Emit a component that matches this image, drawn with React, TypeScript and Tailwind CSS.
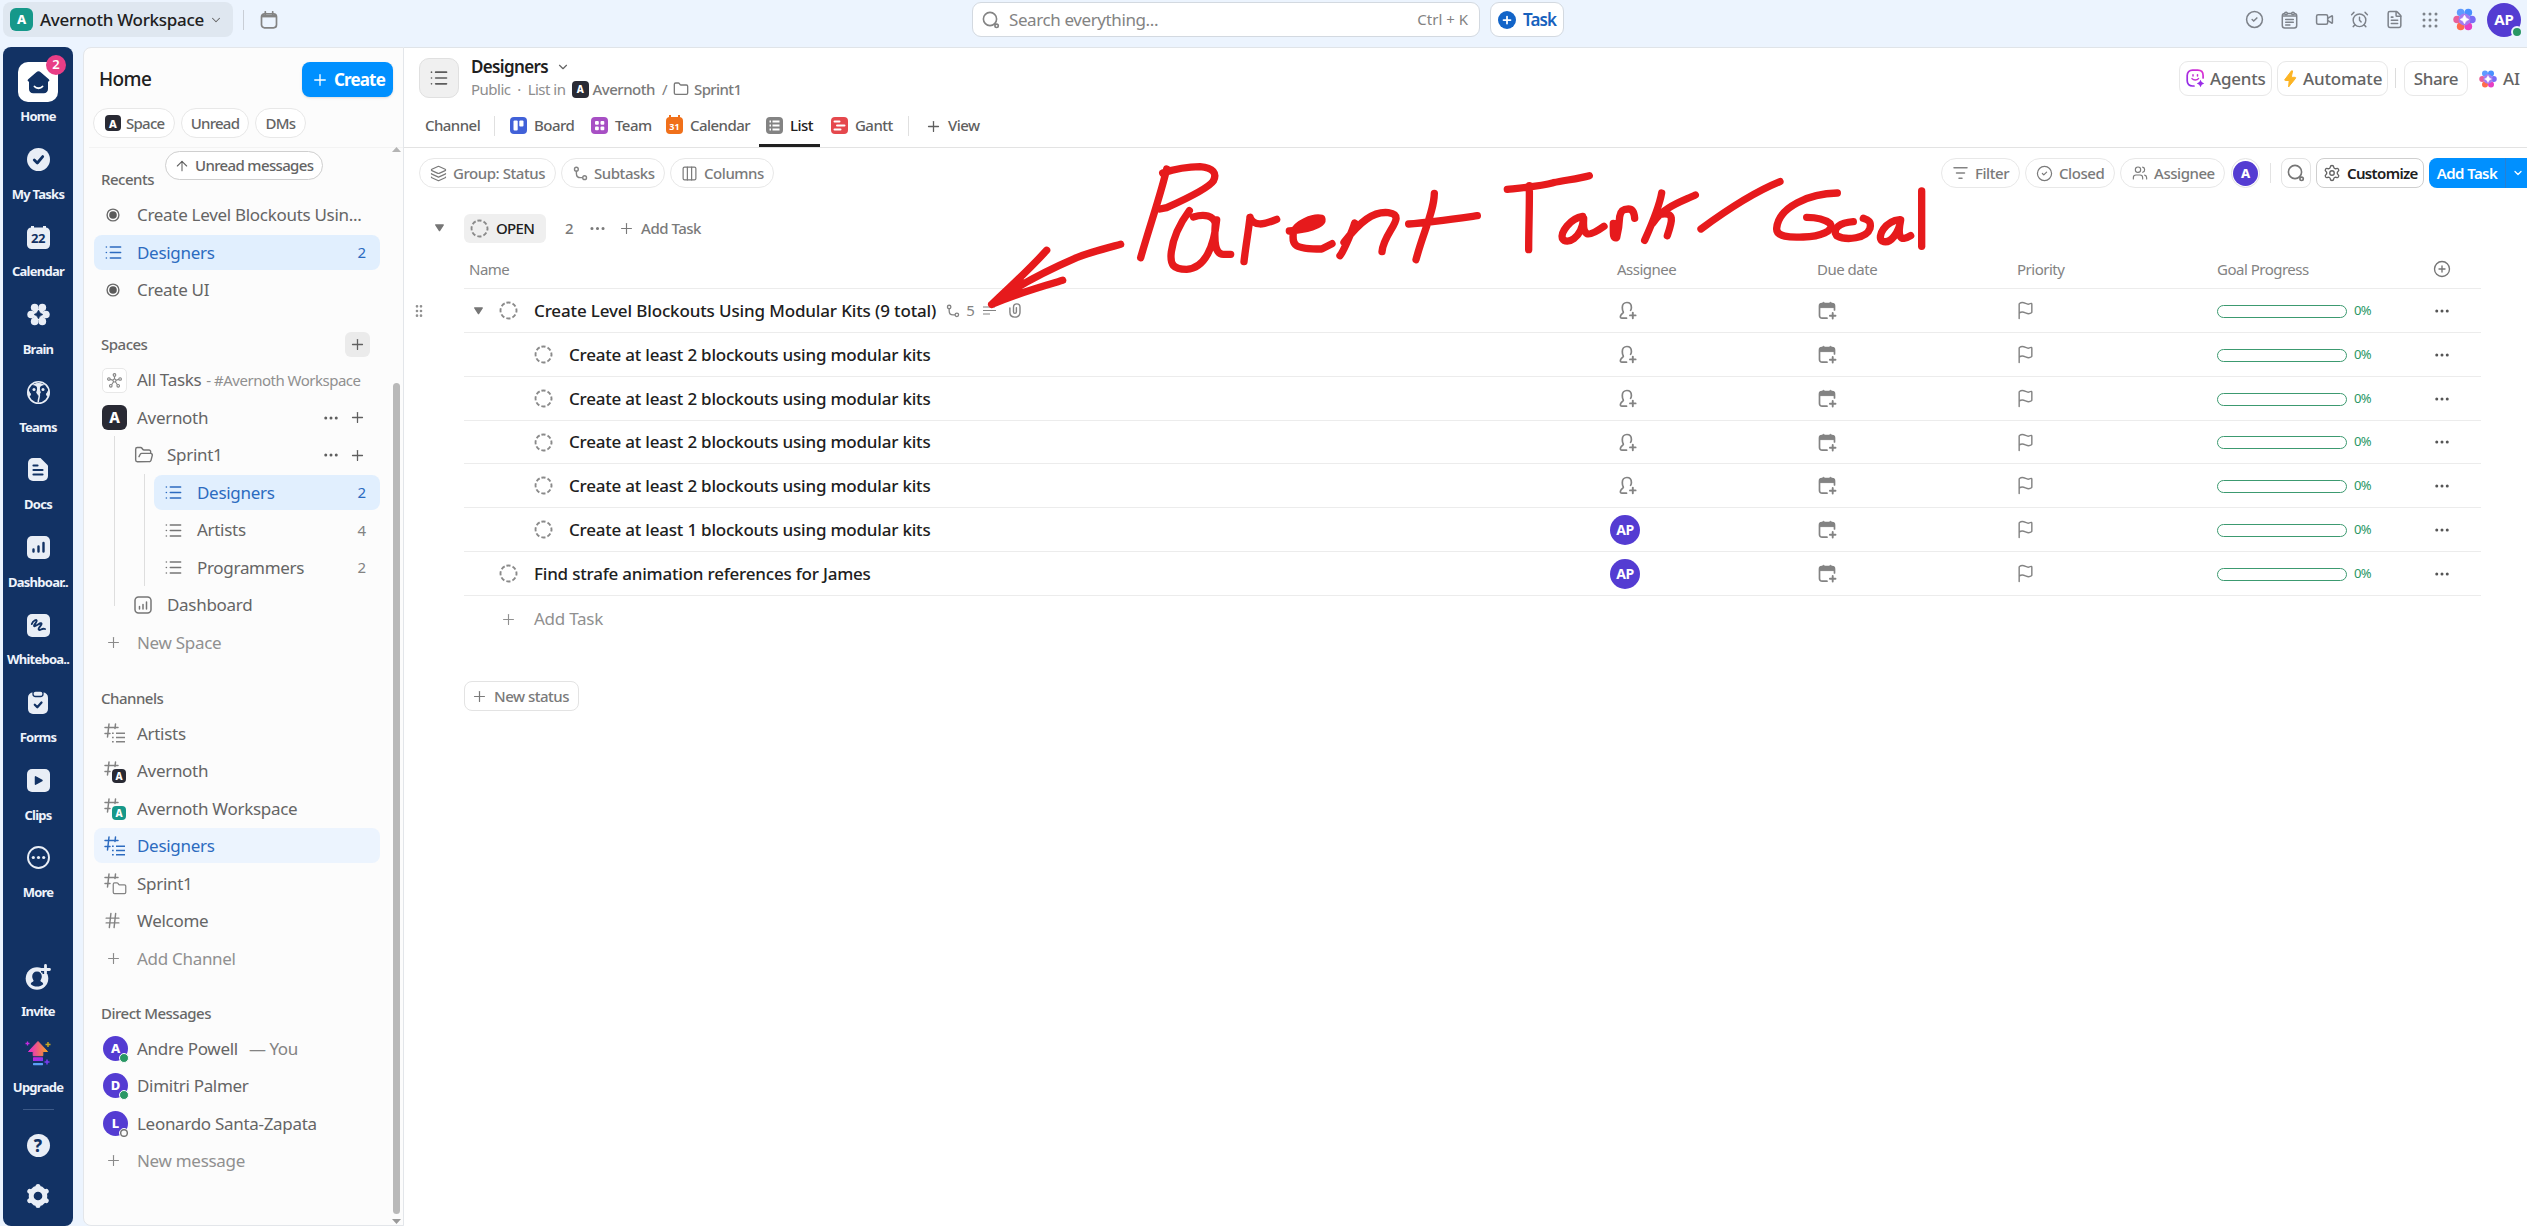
import React from 'react';
import {
  AlarmClock, ArrowUp, ChevronDown, Circle, CircleCheck, CirclePlus, Columns3, Ellipsis, FileText,
  Flag, Folder, FolderOpen, GripVertical, Hash, Layers, List, Plus, Settings, Users, Video,
} from 'lucide-react';

type Kids = { children?: React.ReactNode; className?: string };

/* ---------- icons ---------- */

function Flower({ size, mono }: { size: number; mono?: boolean }) {
  const c = mono
    ? ['#e9eef6', '#e9eef6', '#e9eef6', '#e9eef6', '#e9eef6', '#e9eef6']
    : ['#5f9bff', '#4a90ff', '#e8609a', '#7a6bf5', '#ff6a4d', '#e63fc4'];
  return (
    <svg width={size} height={size} viewBox="0 0 24 24">
      <circle cx="4.3" cy="12" r="4" fill={c[2]} />
      <circle cx="19.7" cy="12" r="4" fill={c[3]} />
      <circle cx="8" cy="19.2" r="4" fill={c[4]} />
      <circle cx="16" cy="19.2" r="4" fill={c[5]} />
      <circle cx="8" cy="4.8" r="4" fill={c[0]} />
      <circle cx="16" cy="4.8" r="4" fill={c[1]} />
      <circle cx="12" cy="12" r="6.2" fill={mono ? '#e9eef6' : '#a57af0'} />
      <path d="M12 7.4Q13 11 16.6 12Q13 13 12 16.6Q11 13 7.4 12Q11 11 12 7.4Z" fill={mono ? '#123264' : '#fff'} stroke={mono ? '#123264' : '#fff'} strokeWidth=".6" />
    </svg>
  );
}

function SearchGlyph({ size, color = '#838383' }: { size: number; color?: string }) {
  return (
    <svg width={size} height={size} viewBox="0 0 18 18" fill="none" stroke={color} strokeWidth="1.6">
      <circle cx="8" cy="8" r="6.6" />
      <circle cx="14.6" cy="14.8" r="1.7" />
      <path d="M12.6 12.8l1 1" />
    </svg>
  );
}

function SubtaskGlyph({ size }: { size: number }) {
  return (
    <svg width={size} height={size} viewBox="0 0 16 16" fill="none" stroke="#838383" strokeWidth="1.5">
      <circle cx="3.6" cy="3.4" r="2" />
      <circle cx="12.4" cy="12.4" r="2" />
      <path d="M3.6 5.4v2.2c0 3 1.6 4.8 4.4 4.8h2.4" />
    </svg>
  );
}

function ClipGlyph() {
  return (
    <svg width="12" height="15" viewBox="0 0 12 15" fill="none" stroke="#838383" strokeWidth="1.4" strokeLinecap="round">
      <path d="M.9 5v4.300c0 3 2 4.800 5 4.800s5.100-1.800 5.100-4.800V4.300C11 2.200 9.700.9 7.800.9S4.500 2.200 4.500 4.300v4.500c0 1 .5 1.600 1.400 1.600s1.500-.6 1.500-1.600V4.600" />
    </svg>
  );
}

function StatusRing() {
  return (
    <svg width="19" height="19" viewBox="0 0 19 19" fill="none" stroke="#8a8a8a" strokeWidth="1.9">
      <circle cx="9.5" cy="9.5" r="8" strokeDasharray="4.1 2.18" transform="rotate(-105 9.5 9.5)" />
    </svg>
  );
}

function Caret() {
  return (
    <svg width="11" height="8" viewBox="0 0 12 9">
      <path d="M1.8 1h8.4L6 7.4Z" fill="#767676" stroke="#767676" strokeWidth="1.6" strokeLinejoin="round" />
    </svg>
  );
}

function AddPerson() {
  return (
    <svg width="18" height="19" viewBox="0 0 18 19" fill="none" stroke="#838383" strokeWidth="1.7" strokeLinecap="round">
      <path d="M7.500 17.200H3c-1.400 0-1.900-.9-1.500-2.200.4-1.200 1.200-2 2.200-2.700.8-.6.8-1.200.4-1.800C3.600 9.400 3.300 7.900 3.300 6.400 3.300 3.500 5.200 1.500 7.900 1.500s4.500 2 4.500 4.900c0 1.200-.3 2.200-.8 3" />
      <path d="M13.800 11.600v5.600M11 14.400h5.600" strokeWidth="1.900" />
    </svg>
  );
}

function AddDate() {
  return (
    <svg width="19" height="19" viewBox="0 0 19 19" fill="none" stroke="#838383" strokeWidth="1.7" strokeLinecap="round">
      <path d="M9 17.200H4.200c-1.700 0-2.700-1-2.700-2.700V5c0-1.500 1-2.400 2.500-2.400h10c1.500 0 2.500.9 2.500 2.400v4" />
      <path d="M1.500 6.200V4.600Q1.500 2.600 4 2.600L5.400 1.200 7 2.600h4L12.600 1.200 14 2.600q2.500 0 2.500 2V6.200Z" fill="#838383" strokeWidth="1" />
      <path d="M14.700 12v5.600M11.900 14.800h5.600" strokeWidth="1.900" />
    </svg>
  );
}

function CalendarGlyph({ size, color }: { size: number; color: string }) {
  return (
    <svg width={size} height={size} viewBox="0 0 18 18" fill="none" stroke={color} strokeWidth="1.7">
      <rect x="1.500" y="2.800" width="15" height="14" rx="3" />
      <path d="M2 5.200h14" strokeWidth="2.400" />
      <path d="M5.300.8v3M12.700.8v3" strokeLinecap="round" />
    </svg>
  );
}

function NotepadGlyph() {
  return (
    <svg width="17" height="18" viewBox="0 0 17 18" fill="none" stroke="#7d828a" strokeWidth="1.5" strokeLinecap="round">
      <rect x="1.300" y="2.600" width="14.400" height="14.400" rx="2.500" />
      <path d="M2 5h13" />
      <circle cx="5" cy="2.500" r="1.300" fill="#ecf4fe" /><circle cx="12" cy="2.500" r="1.300" fill="#ecf4fe" />
      <path d="M4.700 8.400h7.600M4.700 11.200h7.600M4.700 14h4.200" />
    </svg>
  );
}

function GridDots() {
  return (
    <svg width="16" height="16" viewBox="0 0 16 16" fill="#7d828a">
      {[2, 8, 14].map(y => [2, 8, 14].map(x => <circle key={`${x}-${y}`} cx={x} cy={y} r="1.500" />))}
    </svg>
  );
}

function FilterGlyph() {
  return (
    <svg width="15" height="14" viewBox="0 0 15 14" stroke="#838383" strokeWidth="1.500" strokeLinecap="round">
      <path d="M1 1.800h13M3.500 7h8M6 12.200h3" />
    </svg>
  );
}

function AgentGlyph() {
  return (
    <svg width="19" height="19" viewBox="0 0 19 19" fill="none" strokeLinecap="round">
      <defs>
        <linearGradient id="agent" x1="1" y1="0" x2="0" y2="1">
          <stop stopColor="#e02fd0" /><stop offset="1" stopColor="#8a2be8" />
        </linearGradient>
      </defs>
      <path d="M8 17H6.500C3.300 17 1.200 15 1.200 11.800V6.400C1.200 3.300 3.300 1.200 6.500 1.200h5.300c3.200 0 5.300 2.100 5.300 5.200V9" stroke="url(#agent)" strokeWidth="1.700" />
      <path d="M7 5.800v1.300M11.500 5.800v1.300M6 9.600c1.500 1.900 5 1.900 6.500 0" stroke="#c531d6" strokeWidth="1.500" />
      <path d="M14.500 10.800q.7 3 3.700 3.700-3 .7-3.700 3.700-.7-3-3.700-3.700 3-.7 3.700-3.700Z" fill="#9a2be8" />
    </svg>
  );
}

function Bolt() {
  return (
    <svg width="13" height="18" viewBox="0 0 13 18">
      <path d="M7.500.8.900 9.500c-.4.600-.1 1 .5 1h3.800l-.6 6.400 6.900-8.500c.5-.6.200-1.100-.5-1.100H7.300L8.600.9Z" fill="#fcb424" stroke="#fcb424" strokeLinejoin="round" />
    </svg>
  );
}

function ListGlyph({ color }: { color: string }) {
  return <List size={19} color={color} strokeWidth={2} />;
}

/* ---------- navigation rail ---------- */

const F = '#e9eef6';
const N = '#123264';

const railIcons: Record<string, React.ReactNode> = {
  'My Tasks': (
    <svg width="23" height="23" viewBox="0 0 23 23"><circle cx="11.500" cy="11.500" r="11.500" fill={F} /><path d="M7.300 12l3 3 5.400-6.400" fill="none" stroke={N} strokeWidth="2.800" strokeLinecap="round" strokeLinejoin="round" /></svg>
  ),
  Brain: <Flower size={23} mono />,
  Teams: (
    <svg width="23" height="23" viewBox="0 0 23 23">
      <circle cx="11.500" cy="11.500" r="10.700" fill={N} stroke={F} strokeWidth="1.600" />
      <path d="M11.500 2.500c-2 0-3 .4-4.500 1.200 2.500.4 4 2.300 3.700 4.800-.2 1.500-1 2.300-.8 3.200.3 1 1.600.8 1.600 2.800 0-2 1.300-1.800 1.600-2.800.2-.9-.6-1.700-.8-3.200-.3-2.500 1.200-4.400 3.700-4.800-1.500-.8-2.500-1.200-4.500-1.200Z" fill={F} stroke={F} strokeWidth="1.200" />
      <path d="M1.500 9.500c1 3 2.500 2.500 1.800 4.500-.3 1-1 1-1.300 1.600C.9 13.600.9 11.500 1.500 9.500ZM21.500 9.500c-1 3-2.500 2.500-1.800 4.500.3 1 1 1 1.300 1.600 1.100-2 1.100-4.100.5-6.100Z" fill={F} stroke={F} />
      <path d="M12 12.500c1.500 2.500-.8 4-.8 9" fill="none" stroke={F} strokeWidth="1.500" />
      <circle cx="7" cy="8.500" r="1.500" fill={F} /><circle cx="16" cy="8.500" r="1.500" fill={F} />
    </svg>
  ),
  Docs: (
    <svg width="20" height="23" viewBox="0 0 20 23"><path d="M5 0h7.500L20 7.500V18a5 5 0 0 1-5 5H5a5 5 0 0 1-5-5V5a5 5 0 0 1 5-5Z" fill={F} /><path d="M5.500 7.500h4M5.500 12h9M5.500 16.500h9" stroke={N} strokeWidth="2.200" strokeLinecap="round" /></svg>
  ),
  'Dashboar..': (
    <svg width="23" height="23" viewBox="0 0 23 23"><rect width="23" height="23" rx="5" fill={F} /><path d="M6.500 13.500v2M11.500 10.500v5M16.500 7v8.500" stroke={N} strokeWidth="2.400" strokeLinecap="round" /></svg>
  ),
  'Whiteboa..': (
    <svg width="23" height="23" viewBox="0 0 23 23"><rect width="23" height="23" rx="5" fill={F} /><path d="M4.800 10C6 6.500 10.500 4.500 9.600 7.200 8.800 9.500 5.800 12 7.600 12.200c2 .2 6.400-4.700 7-2.500.4 1.600-4.200 4.600-2.800 6 1.500 1.500 3-2.200 6.200-.7" fill="none" stroke={N} strokeWidth="1.900" strokeLinecap="round" /></svg>
  ),
  Forms: (
    <svg width="20" height="23" viewBox="0 0 20 23"><rect y="1.500" width="20" height="21.500" rx="5" fill={F} /><rect x="5" y="0" width="10" height="5.500" rx="2.500" fill={F} stroke={N} strokeWidth="1.300" /><path d="M6.800 13.700l2.500 2.500 4.200-4.700" fill="none" stroke={N} strokeWidth="2.300" strokeLinecap="round" strokeLinejoin="round" /></svg>
  ),
  Clips: (
    <svg width="23" height="23" viewBox="0 0 23 23"><rect width="23" height="23" rx="5" fill={F} /><path d="M8.500 7.800v7.400l6.500-3.700Z" fill={N} stroke={N} strokeWidth="1.500" strokeLinejoin="round" /></svg>
  ),
  More: (
    <svg width="23" height="23" viewBox="0 0 23 23"><circle cx="11.500" cy="11.500" r="10.500" fill="none" stroke={F} strokeWidth="1.900" /><circle cx="6.300" cy="11.500" r="1.600" fill={F} /><circle cx="11.500" cy="11.500" r="1.600" fill={F} /><circle cx="16.700" cy="11.500" r="1.600" fill={F} /></svg>
  ),
  Invite: (
    <svg width="26" height="26" viewBox="0 0 26 26"><circle cx="12" cy="14.500" r="11.300" fill={F} /><path d="M12 7.500c3 0 4.800 2.100 4.800 4.800 0 2-.9 3.300-1.400 4.500-.3 1 2.600 1 2.800 3.400-3.400 3.200-9 3.200-12.400 0 .2-2.400 3.100-2.400 2.800-3.400-.5-1.200-1.400-2.500-1.400-4.500 0-2.700 1.800-4.800 4.800-4.800Z" fill={N} /><path d="M20.500 1v9M16 5.500h9" stroke={N} strokeWidth="6" /><path d="M20.500 1.500v8M16.500 5.500h8" stroke={F} strokeWidth="2.800" strokeLinecap="round" /></svg>
  ),
  Upgrade: (
    <svg width="26" height="26" viewBox="0 0 26 26">
      <defs>
        <linearGradient id="up" x1="0" y1="0" x2="1" y2="0"><stop stopColor="#e22bd0" /><stop offset=".5" stopColor="#f0607a" /><stop offset="1" stopColor="#f5a623" /></linearGradient>
        <linearGradient id="dn" x1="0" y1="0" x2="1" y2="1"><stop stopColor="#d320d8" /><stop offset="1" stopColor="#7a3df0" /></linearGradient>
      </defs>
      <path d="M13 1.500 3.500 11.500h4.700v4.200h9.600v-4.200h4.700Z" fill="url(#up)" stroke="url(#up)" strokeLinejoin="round" />
      <rect x="8" y="17.300" width="10" height="3.800" rx=".6" fill="url(#dn)" />
      <rect x="8" y="22.900" width="10" height="2.300" rx=".6" fill="#5aa0f5" />
      <path d="M2.500 1.500v4M.5 3.500h4" stroke="#c22be0" strokeWidth="1.300" />
      <path d="M23 2v5M20.500 4.500h5" stroke="#c9a820" strokeWidth="1.400" />
      <path d="M22 19.500v5M19.500 22h5" stroke="#7a3df0" strokeWidth="1.500" />
    </svg>
  ),
};

function RailLabel({ children }: Kids) {
  return <div className="flex h-[30px] w-full items-center justify-center whitespace-nowrap text-[13px] font-bold tracking-[-0.75px] text-[#eef3fb]">{children}</div>;
}

function RailItem({ name, children }: { name: string; children?: React.ReactNode }) {
  return (
    <div className="flex h-[77.6px] w-full shrink-0 flex-col items-center">
      <div className="flex h-10 items-center justify-center">{children ?? railIcons[name]}</div>
      <RailLabel>{name}</RailLabel>
    </div>
  );
}

function Rail() {
  return (
    <nav className="ml-[3px] flex h-[1179px] w-[70px] flex-col items-center overflow-hidden rounded-lg bg-[#123264] pt-[15px]">
      <div className="flex h-[77.6px] shrink-0 flex-col items-center">
        <div className="relative flex size-10 items-center justify-center rounded-[10px] bg-white">
          <svg width="23" height="23" viewBox="0 0 23 23">
            <path d="M9.300 1.200 1.200 8.300c-1 .9-.7 2.200.8 2.400v7.300c0 2.700 1.700 4.200 4.200 4.200h10.600c2.500 0 4.200-1.500 4.200-4.200v-7.300c1.500-.2 1.800-1.500.8-2.400L13.700 1.200c-1.400-1.200-3-1.200-4.400 0Z" fill={N} />
            <path d="M7.500 15.500c2 2.300 6 2.300 8 0" fill="none" stroke="#fff" strokeWidth="1.900" strokeLinecap="round" />
          </svg>
          <span className="absolute -right-2 -top-[7px] flex size-5 items-center justify-center rounded-full bg-[#e83e86] text-[13px] font-semibold text-white">2</span>
        </div>
        <RailLabel>Home</RailLabel>
      </div>
      <RailItem name="My Tasks" />
      <RailItem name="Calendar">
        <div className="relative flex h-[23px] w-[23px] items-end justify-center">
          <svg width="23" height="23" viewBox="0 0 23 23" className="absolute inset-0"><rect y="1.500" width="23" height="21.500" rx="4.500" fill={F} /><path d="M5.500 0v3M17.500 0v3" stroke={F} strokeWidth="3" /></svg>
          <span className="relative pb-[4px] text-[13px] font-bold leading-[14px] tracking-[-0.5px] text-[#123264]">22</span>
        </div>
      </RailItem>
      {['Brain', 'Teams', 'Docs', 'Dashboar..', 'Whiteboa..', 'Forms', 'Clips', 'More'].map(n => <RailItem key={n} name={n} />)}
      <div className="mt-[41px] flex w-full flex-col items-center">
        <div className="h-[76px] w-full"><RailItem name="Invite" /></div>
        <div className="h-[76px] w-full"><RailItem name="Upgrade" /></div>
      </div>
      <div className="h-px w-[31px] shrink-0 bg-[#3d5a88]" />
      <div className="mt-6 flex size-[23px] shrink-0 items-center justify-center rounded-full bg-[#e9eef6] text-[17px] font-extrabold leading-none text-[#123264]">?</div>
      <svg width="24" height="24" viewBox="0 0 24 24" className="mt-[27px] shrink-0">
        <path d="M12 3 15.500 3.700 19.500 7.500 20 12 19.500 16.500 15.500 20.300 12 21 8.500 20.300 4.500 16.500 4 12 4.500 7.500 8.500 3.700Z" fill={F} stroke={F} strokeWidth="2.500" strokeLinejoin="round" />
        <path d="M12 2.500v19M3.800 7.300l16.400 9.400M3.800 16.700 20.200 7.300" stroke={F} strokeWidth="5" strokeLinecap="round" />
        <circle cx="12" cy="12" r="4.300" fill={N} />
      </svg>
    </nav>
  );
}

/* ---------- sidebar ---------- */

function Tile({ letter, className }: { letter: string; className: string }) {
  return <span className={`flex shrink-0 items-center justify-center font-extrabold leading-none text-white ${className}`}>{letter}</span>;
}

function Row({ icon, children, count, tail, tone, indent = 'pl-0' }: { icon: React.ReactNode; children: React.ReactNode; count?: number; tail?: boolean; tone?: 'active' | 'soft' | 'muted'; indent?: string }) {
  const bg = tone === 'active' ? 'bg-[#e1effe]' : tone === 'soft' ? 'bg-[#ecf4fe]' : '';
  const fg = tone === 'active' || tone === 'soft' ? 'text-[#2c6bc0]' : tone === 'muted' ? 'text-[#909090]' : 'text-[#656565]';
  return (
    <div className={`flex h-[37.5px] items-center ${indent}`}>
      <div className={`flex h-[35px] flex-1 items-center rounded-lg ${bg} ${fg}`}>
        <span className="flex w-[43px] shrink-0 items-center pl-2 [&>*]:shrink-0">{icon}</span>
        <span className="flex flex-1 items-center whitespace-nowrap text-[17px] tracking-[-0.3px]">{children}</span>
        {count !== undefined && <span className={`pr-[14px] text-[15px] ${tone ? '' : 'text-[#838383]'}`}>{count}</span>}
        {tail && (
          <span className="flex items-center gap-[9px] pr-[14px] text-[#5f5f5f]">
            <Ellipsis size={18} /><Plus size={17} strokeWidth={1.800} />
          </span>
        )}
      </div>
    </div>
  );
}

const Radio = () => (
  <svg width="14" height="14" viewBox="0 0 14 14" className="ml-[4px]"><circle cx="7" cy="7" r="5.900" fill="none" stroke="#6a6a6a" strokeWidth="1.400" /><circle cx="7" cy="7" r="3.800" fill="#5a5a5a" /></svg>
);

function ChannelIcon({ kind, color = '#838383' }: { kind: 'list' | 'dark' | 'teal' | 'folder' | 'plain'; color?: string }) {
  if (kind === 'plain') return <Hash size={19} color={color} strokeWidth={1.800} className="ml-px" />;
  return (
    <span className="relative ml-px h-[24px] w-[24px]">
      <svg width="16" height="16" viewBox="0 0 16 16" fill="none" stroke={color} strokeWidth="1.500" strokeLinecap="round" className="absolute left-px top-[2px]">
        <path d="M1 4.500h13M1 10.500h5M5 1 3.500 14M11.500 1 11 5.500" />
      </svg>
      {kind === 'list' && (
        <svg width="13" height="11" viewBox="0 0 13 11" stroke={color} strokeWidth="1.500" className="absolute left-[9px] top-[11px]"><path d="M0 1.200h1.700M4 1.200h9M0 5.500h1.700M4 5.500h9M0 9.800h1.700M4 9.800h9" /></svg>
      )}
      {kind === 'folder' && <Folder size={15} color={color} strokeWidth={2} className="absolute left-[9px] top-[10px] bg-[#fcfcfc]" />}
      {kind === 'dark' && <Tile letter="A" className="absolute left-[9px] top-[10px] size-[14px] rounded-[4px] bg-[#292a34] text-[10px]" />}
      {kind === 'teal' && <Tile letter="A" className="absolute left-[9px] top-[10px] size-[14px] rounded-[4px] bg-[#16988a] text-[10px]" />}
    </span>
  );
}

function Dm({ letter, online }: { letter: string; online: boolean }) {
  return (
    <span className="relative ml-px size-[25px]">
      <Tile letter={letter} className="size-[25px] rounded-full bg-[#543cd2] text-[13px] font-bold" />
      <span className={`absolute -bottom-[2px] -right-px flex size-[10px] items-center justify-center rounded-full border-[1.5px] border-[#fcfcfc] ${online ? 'bg-[#299764]' : 'bg-[#fcfcfc]'}`}>
        {!online && <Circle size={8} color="#777" strokeWidth={4.500} className="shrink-0" />}
      </span>
    </span>
  );
}

const PlusIcon = () => <Plus size={17} color="#8a8a8a" strokeWidth={1.600} className="ml-[3px]" />;

function Section({ children }: Kids) {
  return <div className="flex h-[33.4px] items-center pl-[7px] text-[15px] font-medium tracking-[-0.5px] text-[#686868]">{children}</div>;
}

function Sidebar() {
  return (
    <aside className="ml-[10px] flex h-[1179px] w-[321px] flex-col rounded-bl-lg rounded-tl-lg border border-[#e3e6ea] bg-[#fcfcfc]">
      <div className="flex h-[65px] items-center justify-between pb-[2px] pl-[15px] pr-[10px]">
        <h2 className="text-[19px] font-medium tracking-[-0.6px] text-[#202020]">Home</h2>
        <button className="flex h-[35px] w-[91px] items-center gap-[5px] rounded-lg bg-[#0090ff] pl-[9px] text-[17px] font-bold tracking-[-0.85px] text-white shadow-sm">
          <Plus size={18} strokeWidth={1.800} />Create
        </button>
      </div>
      <div className="flex h-[34px] items-start gap-[6px] pl-[9px] text-[15px] font-medium tracking-[-0.75px] text-[#646464]">
        <span className="-mt-[5px] flex h-[30px] w-[82px] items-center gap-[5px] rounded-full border border-[#e8e8e8] bg-white pl-[11px]"><Tile letter="A" className="size-4 rounded-[4px] bg-[#292a34] text-[11px] tracking-normal" />Space</span>
        <span className="-mt-[5px] flex h-[30px] w-[68px] items-center justify-center rounded-full border border-[#e8e8e8] bg-white">Unread</span>
        <span className="-mt-[5px] flex h-[30px] w-[51px] items-center justify-center rounded-full border border-[#e8e8e8] bg-white">DMs</span>
      </div>
      <div className="relative ml-[5px] flex flex-1 border-t border-[#f3f3f3]">
        <div className="absolute left-[76px] top-[3px] flex h-[29px] w-[158px] items-center gap-[5px] rounded-full border border-[#cfcfcf] bg-white pl-[8px] text-[15px] font-medium tracking-[-0.65px] text-[#646464]">
          <ArrowUp size={16} strokeWidth={1.600} />Unread messages
        </div>
        <div className="ml-[5px] w-[286px] pt-[15px]">
          <Section>Recents</Section>
          <Row icon={<Radio />}>Create Level Blockouts Usin...</Row>
          <Row icon={<span className="ml-[2px]"><ListGlyph color="#2c6bc0" /></span>} count={2} tone="active">Designers</Row>
          <Row icon={<Radio />}>Create UI</Row>
          <div className="mt-[19px] flex items-center justify-between pr-[10px]">
            <Section>Spaces</Section>
            <span className="flex size-[25px] items-center justify-center rounded-md bg-[#ebebeb]"><Plus size={17} color="#606060" strokeWidth={1.800} /></span>
          </div>
          <Row icon={
            <span className="flex size-[25px] items-center justify-center rounded-[5px] border border-[#e8e8e8] bg-white">
              <svg width="15" height="15" viewBox="0 0 15 15" fill="none" stroke="#838383" strokeWidth="1.100">
                <circle cx="7.500" cy="7.500" r="1.500" /><circle cx="7.500" cy="1.900" r="1.300" /><circle cx="1.900" cy="6" r="1.300" /><circle cx="13.100" cy="6" r="1.300" /><circle cx="3.800" cy="12.800" r="1.300" /><circle cx="11.200" cy="12.800" r="1.300" />
                <path d="M7.500 6V3.200M6 7.200 3.200 6.400M9 7.200l2.800-.8M6.600 8.800 4.600 11.700M8.400 8.800l2 2.900" />
              </svg>
            </span>
          }>All Tasks<span className="ml-[5px] text-[15px] tracking-[-0.5px] text-[#909090]">- #Avernoth Workspace</span></Row>
          <Row tail icon={<Tile letter="A" className="size-[25px] rounded-[6px] bg-[#292a34] text-[15px]" />}>Avernoth</Row>
          <div className="relative">
            <span className="absolute bottom-[18px] left-[20px] top-0 w-px bg-[#dedede]" />
            <Row tail indent="pl-[30px]" icon={<FolderOpen size={20} color="#757575" strokeWidth={1.700} className="ml-[2px]" />}>Sprint1</Row>
            <div className="relative">
              <span className="absolute bottom-0 left-[50px] top-0 w-px bg-[#dedede]" />
              <Row indent="pl-[60px]" tone="active" count={2} icon={<span className="ml-[2px]"><ListGlyph color="#2c6bc0" /></span>}>Designers</Row>
              <Row indent="pl-[60px]" count={4} icon={<span className="ml-[2px]"><ListGlyph color="#757575" /></span>}>Artists</Row>
              <Row indent="pl-[60px]" count={2} icon={<span className="ml-[2px]"><ListGlyph color="#757575" /></span>}>Programmers</Row>
            </div>
            <Row indent="pl-[30px]" icon={
              <svg width="18" height="18" viewBox="0 0 18 18" fill="none" stroke="#757575" strokeWidth="1.500" strokeLinecap="round" className="ml-[2px]"><rect x="1" y="1" width="16" height="16" rx="3.500" /><path d="M5.500 10.500v2.500M9 8.500V13M12.500 6v7" /></svg>
            }>Dashboard</Row>
          </div>
          <Row tone="muted" icon={<PlusIcon />}>New Space</Row>
          <div className="mt-5"><Section>Channels</Section></div>
          <Row icon={<ChannelIcon kind="list" />}>Artists</Row>
          <Row icon={<ChannelIcon kind="dark" />}>Avernoth</Row>
          <Row icon={<ChannelIcon kind="teal" />}>Avernoth Workspace</Row>
          <Row tone="soft" icon={<ChannelIcon kind="list" color="#2c6bc0" />}>Designers</Row>
          <Row icon={<ChannelIcon kind="folder" />}>Sprint1</Row>
          <Row icon={<ChannelIcon kind="plain" />}>Welcome</Row>
          <Row tone="muted" icon={<PlusIcon />}>Add Channel</Row>
          <div className="mt-[19px]"><Section>Direct Messages</Section></div>
          <Row icon={<Dm letter="A" online />}>Andre Powell<span className="ml-[11px] tracking-[-0.4px] text-[#838383]">— You</span></Row>
          <Row icon={<Dm letter="D" online />}>Dimitri Palmer</Row>
          <Row icon={<Dm letter="L" online={false} />}>Leonardo Santa-Zapata</Row>
          <Row tone="muted" icon={<PlusIcon />}>New message</Row>
        </div>
        <div className="ml-auto mr-[2px] flex w-[9px] flex-col items-center">
          <svg width="9" height="5" viewBox="0 0 9 5" className="-mt-px"><path d="M4.500 0 9 5H0Z" fill="#b4b4b4" /></svg>
          <span className="mt-[231px] h-[831px] w-[7px] rounded-full bg-[#b9b9b9]" />
          <svg width="9" height="5" viewBox="0 0 9 5" className="mt-[5px]"><path d="M4.500 5 9 0H0Z" fill="#9a9a9a" /></svg>
        </div>
      </div>
    </aside>
  );
}

/* ---------- top bar ---------- */

function TopBar() {
  return (
    <header className="flex h-[47px] items-start">
      <div className="ml-[3px] mt-[2px] flex h-[35px] w-[230px] items-center rounded-lg bg-[#dfe7f0] pl-[7px]">
        <Tile letter="A" className="size-[23px] rounded-[6px] bg-[#16988a] text-[13px]" />
        <span className="ml-[7px] w-[164px] whitespace-nowrap text-[17px] font-medium tracking-[-0.28px] text-[#202020]">Avernoth Workspace</span>
        <ChevronDown size={14} color="#646464" strokeWidth={1.800} className="ml-[5px]" />
      </div>
      <span className="ml-[10px] mt-[10px] h-5 w-px bg-[#c9ced6]" />
      <span className="ml-[16px] mt-[11px]"><CalendarGlyph size={18} color="#838383" /></span>
      <div className="ml-[694px] mt-[2px] flex h-[35px] w-[508px] items-center rounded-[9px] border border-[#d3d9e0] bg-white pl-[9px] pr-[11px] text-[#838383]">
        <SearchGlyph size={18} />
        <span className="ml-[9px] text-[17px] tracking-[-0.4px]">Search everything...</span>
        <span className="ml-auto text-[15px]">Ctrl + K</span>
      </div>
      <div className="ml-[10px] mt-[2px] flex h-[35px] w-[74px] items-center rounded-[9px] border border-[#d3d9e0] bg-white pl-[7px] text-[17px] font-semibold tracking-[-0.9px] text-[#1761bd]">
        <span className="mr-[7px] flex size-[18px] items-center justify-center rounded-full bg-[#1264c8] text-white"><Plus size={12} strokeWidth={3.500} /></span>Task
      </div>
      <div className="ml-auto flex h-[39px] items-center pr-[6px] text-[#7d828a]">
        {[<CircleCheck size={19} strokeWidth={1.900} />, <NotepadGlyph />, <Video size={19} strokeWidth={1.900} />, <AlarmClock size={19} strokeWidth={1.800} />, <FileText size={19} strokeWidth={1.900} />, <GridDots />, <Flower size={23} />].map((n, i) => (
          <span key={i} className="flex w-[35px] justify-center">{n}</span>
        ))}
        <span className="relative ml-[5px] flex size-[34px] items-center justify-center rounded-full bg-[#543cd2] text-[15px] font-bold text-white">
          AP<span className="absolute -bottom-px -right-[2px] size-[12px] rounded-full border-2 border-[#ecf4fe] bg-[#299764]" />
        </span>
      </div>
    </header>
  );
}

/* ---------- main ---------- */

function ViewTab({ color, icon, children, className = '' }: { color: string; icon: React.ReactNode; children: React.ReactNode; className?: string }) {
  return (
    <span className={`flex h-full shrink-0 items-center ${className}`}>
      <svg width="17" height="17" viewBox="0 0 17 17" className="mr-[7px] shrink-0"><rect width="17" height="17" rx="4" fill={color} />{icon}</svg>
      {children}
    </span>
  );
}

function Pill({ children, className = '' }: Kids) {
  return <span className={`flex h-[30px] shrink-0 items-center whitespace-nowrap rounded-full border border-[#e8e8e8] bg-white ${className}`}>{children}</span>;
}

function MainHeader() {
  return (
    <div className="flex h-[100px] shrink-0 flex-col border-b border-[#e3e3e3]">
      <div className="flex h-[57px] pl-[15px]">
        <span className="mt-[10px] flex size-10 items-center justify-center rounded-[10px] border border-[#e0e0e0] bg-[#f0f0f0]"><List size={20} color="#5c5c5c" /></span>
        <div className="ml-[12px] mt-[8px]">
          <div className="flex h-[22px] items-center gap-[8px] text-[17px] font-semibold tracking-[-0.65px] text-[#202020]">Designers<ChevronDown size={14} color="#646464" strokeWidth={2} /></div>
          <div className="flex h-[22px] items-center whitespace-nowrap text-[15px] tracking-[-0.5px] text-[#8d8d8d]">
            <span>Public&nbsp; ·&nbsp; List in</span>
            <Tile letter="A" className="ml-[6px] size-[17px] rounded-[4px] bg-[#292a34] text-[10px]" />
            <span className="ml-1 font-medium text-[#7a7a7a]">Avernoth</span>
            <span className="ml-[7px] text-[#7a7a7a]">/</span>
            <Folder size={16} color="#7a7a7a" strokeWidth={2} className="ml-[6px]" />
            <span className="ml-[5px] font-medium tracking-[-0.6px] text-[#7a7a7a]">Sprint1</span>
          </div>
        </div>
        <div className="ml-auto mt-[13px] flex h-[35px] text-[17px] font-medium tracking-[-0.2px] text-[#646464]">
          <span className="flex w-[93px] items-center rounded-[9px] border border-[#e8e8e8] pl-[6px]"><AgentGlyph /><span className="ml-[5px]">Agents</span></span>
          <span className="ml-[5px] flex w-[111px] items-center rounded-[9px] border border-[#e8e8e8] pl-[6px]"><Bolt /><span className="ml-[6px]">Automate</span></span>
          <span className="ml-[7px] mt-[7px] h-5 w-px bg-[#dcdcdc]" />
          <span className="ml-[8px] flex w-[64px] items-center justify-center rounded-[9px] border border-[#e8e8e8] tracking-[-0.4px]">Share</span>
          <span className="ml-[11px] flex w-[48px] items-center"><Flower size={18} /><span className="ml-[6px]">AI</span></span>
        </div>
      </div>
      <div className="flex h-[42px] items-center whitespace-nowrap pl-[21px] text-[15px] font-medium tracking-[-0.55px] text-[#5f5f5f]">
        <span className="w-[54px] pb-px">Channel</span>
        <span className="ml-[15px] h-5 w-px bg-[#e0e0e0]" />
        <ViewTab color="#4161d8" className="ml-[15px] w-[81px] pb-px" icon={<><rect x="3.500" y="3.500" width="4.200" height="10" rx="1" fill="#fff" /><rect x="9.300" y="3.500" width="4.200" height="6" rx="1" fill="#fff" /></>}>Board</ViewTab>
        <ViewTab color="#a74fc4" className="w-[75px] pb-px" icon={<>{[4, 9.500].map(x => [4, 9.500].map(y => <rect key={`${x}${y}`} x={x} y={y} width="3.800" height="3.800" rx="1" fill="#fff" />))}</>}>Team</ViewTab>
        <span className="flex h-full w-[93px] items-center pb-px">
          <span className="relative mr-[7px] flex size-[17px] items-end justify-center rounded-[4px] bg-[#f0701a]">
            <span className="absolute -top-[2px] left-[3px] h-[3px] w-[2px] bg-[#f0701a]" /><span className="absolute -top-[2px] right-[3px] h-[3px] w-[2px] bg-[#f0701a]" />
            <span className="pb-[2px] text-[9px] font-bold leading-[11px] tracking-normal text-white">31</span>
          </span>
          Calendar
        </span>
        <span className="flex h-full w-[61px] justify-center border-b-[3px] border-[#202020] pt-[2px] text-[#202020]">
          <ViewTab color="#838383" icon={<path d="M3.500 4.500h1.500M6.500 4.500H13.500M3.500 8.500h1.500M6.500 8.500H13.500M3.500 12.500h1.500M6.500 12.500H13.500" stroke="#fff" strokeWidth="2.200" />}>List</ViewTab>
        </span>
        <ViewTab color="#e5484d" className="ml-[11px] w-[77px] pb-px" icon={<path d="M3.500 4.500h5M6 8.500h7.500M3.500 12.500h6" stroke="#fff" strokeWidth="2" strokeLinecap="round" />}>Gantt</ViewTab>
        <span className="h-5 w-px bg-[#e0e0e0]" />
        <Plus size={17} strokeWidth={1.800} className="ml-[16px] mr-[6px]" /><span className="pb-px">View</span>
      </div>
    </div>
  );
}

function Toolbar() {
  return (
    <div className="mt-[10px] flex h-[30px] pl-[15px] text-[15px] font-medium tracking-[-0.45px] text-[#7a7a7a]">
      <Pill className="w-[137px] gap-[6px] pl-[10px]"><Layers size={17} strokeWidth={1.700} />Group: Status</Pill>
      <Pill className="ml-[5px] w-[104px] gap-[6px] pl-[11px]"><SubtaskGlyph size={15} />Subtasks</Pill>
      <Pill className="ml-[5px] w-[104px] gap-[6px] pl-[10px]"><Columns3 size={17} strokeWidth={1.700} />Columns</Pill>
      <Pill className="ml-auto w-[79px] gap-[7px] pl-[11px]"><FilterGlyph />Filter</Pill>
      <Pill className="ml-[5px] w-[90px] gap-[6px] pl-[10px]"><CircleCheck size={17} strokeWidth={1.700} />Closed</Pill>
      <Pill className="ml-[5px] w-[105px] gap-[6px] pl-[11px]"><Users size={16} strokeWidth={1.700} />Assignee</Pill>
      <span className="ml-[6px] flex h-[30px] w-[29px] items-center justify-center rounded-full border border-[#e3e3e3]"><Tile letter="A" className="size-[25px] rounded-full bg-[#543cd2] text-[13px] tracking-normal" /></span>
      <span className="ml-[10px] mt-[5px] h-5 w-px bg-[#e3e3e3]" />
      <span className="ml-[10px] flex h-[30px] w-[30px] items-center justify-center rounded-lg border border-[#e3e3e3]"><SearchGlyph size={18} color="#757575" /></span>
      <span className="ml-[5px] flex h-[30px] w-[108px] items-center gap-[6px] rounded-lg border border-[#cfcfcf] pl-[6px] font-semibold tracking-[-0.65px] text-[#202020]"><Settings size={18} color="#646464" strokeWidth={1.800} />Customize</span>
      <span className="ml-[5px] flex h-[30px] w-[98px] items-center rounded-l-lg bg-[#0090ff] font-semibold tracking-[-0.6px] text-white">
        <span className="flex h-full w-[77px] items-center justify-center border-r border-[#2b7fd0]">Add Task</span>
        <ChevronDown size={12} strokeWidth={2.500} className="ml-[6px]" />
      </span>
    </div>
  );
}

type Task = { name: string; sub?: boolean; parent?: boolean; who?: boolean; h: string };
const two = 'Create at least 2 blockouts using modular kits';
const tasks: Task[] = [
  { name: 'Create Level Blockouts Using Modular Kits (9 total)', parent: true, h: 'h-[44px]' },
  { name: two, sub: true, h: 'h-[44px]' },
  { name: two, sub: true, h: 'h-[44px]' },
  { name: two, sub: true, h: 'h-[43px]' },
  { name: two, sub: true, h: 'h-[44px]' },
  { name: 'Create at least 1 blockouts using modular kits', sub: true, who: true, h: 'h-[44px]' },
  { name: 'Find strafe animation references for James', who: true, h: 'h-[44px]' },
];

function TaskRow({ t }: { t: Task }) {
  return (
    <div className={`relative flex items-center border-b border-[#ececec] ${t.h}`}>
      {t.parent && <GripVertical size={16} color="#909090" className="absolute -left-[53px] top-[14px]" />}
      <div className={`flex flex-1 items-center ${t.sub ? 'pl-[70px]' : t.parent ? 'pl-[9px]' : 'pl-[35px]'}`}>
        {t.parent && <span className="w-[26px]"><Caret /></span>}
        <StatusRing />
        <span className={`ml-4 whitespace-nowrap text-[17px] font-medium text-[#202020] ${t.parent ? 'tracking-[-0.14px]' : 'tracking-[-0.21px]'}`}>{t.name}</span>
        {t.parent && (
          <span className="ml-[10px] flex items-center text-[15px] text-[#838383]">
            <SubtaskGlyph size={14} /><span className="ml-[6px]">5</span>
            <svg width="13" height="9" viewBox="0 0 13 9" stroke="#838383" strokeWidth="1.200" className="ml-[8px] mr-[13px]"><path d="M0 1h12M0 4.500h13M0 8h7" /></svg>
            <ClipGlyph />
          </span>
        )}
      </div>
      <div className="w-[200px]">
        {t.who ? <span className="ml-px flex size-[30px] items-center justify-center rounded-full bg-[#543cd2] text-[14px] font-bold tracking-[-0.4px] text-white">AP</span> : <span className="block pl-[10px]"><AddPerson /></span>}
      </div>
      <div className="w-[200px] pl-[9px]"><AddDate /></div>
      <div className="w-[200px] pl-[7px]"><Flag size={19} color="#838383" strokeWidth={1.800} /></div>
      <div className="flex w-[200px] items-center pl-[8px]">
        <span className="mt-px h-[13px] w-[130px] rounded-full border border-[#3c9a70]" />
        <span className="ml-[7px] text-[13px] tracking-[-0.6px] text-[#299764]">0%</span>
      </div>
      <div className="w-[72px] pl-[24px]"><Ellipsis size={18} color="#555" strokeWidth={2} /></div>
    </div>
  );
}

function Board() {
  return (
    <div className="mt-[26px] pl-[60px] pr-[46px]">
      <div className="relative flex h-[29px] items-center text-[15px] font-medium tracking-[-0.5px] text-[#7a7a7a]">
        <span className="absolute -left-[30px] top-[10px]"><Caret /></span>
        <span className="flex h-full w-[82px] items-center gap-[7px] rounded-md bg-[#efefef] pl-[6px] font-medium tracking-[-0.7px] text-[#202020]"><StatusRing />OPEN</span>
        <span className="ml-[19px]">2</span>
        <Ellipsis size={19} className="ml-[15px]" strokeWidth={1.900} />
        <Plus size={17} className="ml-[11px] mr-[6px]" strokeWidth={1.600} />Add Task
      </div>
      <div className="flex h-[46px] items-center border-b border-[#ececec] pt-[7px] text-[15px] tracking-[-0.5px] text-[#838383]">
        <span className="flex-1 pl-[5px]">Name</span>
        <span className="w-[200px] pl-[8px]">Assignee</span>
        <span className="w-[200px] pl-[8px]">Due date</span>
        <span className="w-[200px] pl-[8px]">Priority</span>
        <span className="w-[200px] pl-[8px]">Goal Progress</span>
        <span className="w-[72px] pl-[24px]"><CirclePlus size={18} color="#757575" strokeWidth={1.800} /></span>
      </div>
      {tasks.map((t, i) => <TaskRow key={i} t={t} />)}
      <div className="flex h-[46px] items-center pl-[36px] text-[17px] tracking-[-0.26px] text-[#909090]">
        <Plus size={17} strokeWidth={1.600} className="mr-[17px]" />Add Task
      </div>
      <div className="mt-[39px] flex h-[30px] w-[115px] items-center rounded-lg border border-[#e3e3e3] pl-[6px] text-[15px] font-medium tracking-[-0.5px] text-[#7a7a7a]">
        <Plus size={17} strokeWidth={1.700} className="mr-[6px]" />New status
      </div>
    </div>
  );
}

/* Red pen annotation laid over the page */
function Annotation() {
  return (
    <svg width="970" height="165" viewBox="0 0 2910 495" className="pointer-events-none absolute left-[980px] top-[155px]" fill="none" stroke="#e61a1c" strokeWidth="22" strokeLinecap="round" strokeLinejoin="round">
      <path d="M422 268C370 282 330 292 290 308C230 334 120 385 35 448M200 286C180 308 130 360 35 448M248 376C200 390 120 412 35 448M35 448C70 415 95 398 125 382" />
      <path d="M560 42C545 110 510 210 482 308M548 54C600 37 640 35 660 35C700 38 712 55 700 78C685 100 600 140 560 158L540 162" />
      <path d="M628 167C600 205 580 245 574 290C569 330 580 343 620 343C675 340 702 275 710 195M640 186C675 175 700 183 706 205C702 260 705 298 730 298H752" />
      <path d="M810 187C805 230 795 290 792 320M810 187C822 215 850 210 890 193" />
      <path d="M928 228C970 225 1035 212 1025 190C1000 184 950 205 940 232C936 270 940 282 1025 282L1056 266M960 212L1010 198" />
      <path d="M1124 204C1118 225 1090 290 1080 302M1092 262C1140 200 1180 168 1225 173C1285 182 1210 232 1206 290" />
      <path d="M1363 115C1362 170 1330 230 1308 314M1286 207C1350 202 1420 192 1492 182" />
      <g transform="translate(1470 0)">
        <path d="M112 103C150 99 210 94 250 83C290 75 330 70 358 62M178 92C179 150 176 220 176 284" />
        <path d="M338 184C300 190 272 232 277 250C290 272 335 250 341 190C338 245 352 250 402 214" />
        <path d="M430 205C430 235 428 252 440 248C446 225 448 205 449 185C452 165 462 162 475 162C490 162 493 175 494 190M438 205V240" />
        <path d="M575 114C568 155 540 220 524 256M676 120C640 138 580 155 548 205M570 178C615 170 608 195 592 242" />
        <path d="M693 222C750 180 850 112 930 80" />
        <path d="M1102 114C1020 115 925 155 920 220C918 246 960 248 1000 246C1050 245 1095 228 1080 205C1060 190 1040 187 1010 187" />
        <path d="M1150 200C1110 203 1085 220 1100 242C1130 258 1190 250 1200 220C1205 200 1195 195 1180 190" />
        <path d="M1290 194C1245 198 1220 245 1236 258C1262 270 1288 230 1292 195C1282 245 1290 262 1322 242" />
        <path d="M1355 108V274" />
      </g>
    </svg>
  );
}

export default function App() {
  return (
    <div className="relative h-[1226px] w-full overflow-hidden bg-[#ecf4fe] font-['Noto_Sans',sans-serif]">
      <TopBar />
      <div className="flex h-[1179px]">
        <Rail />
        <Sidebar />
        <main className="flex min-w-0 flex-1 flex-col border-t border-[#e0e4e8] bg-white">
          <MainHeader />
          <Toolbar />
          <Board />
        </main>
      </div>
      <Annotation />
    </div>
  );
}
